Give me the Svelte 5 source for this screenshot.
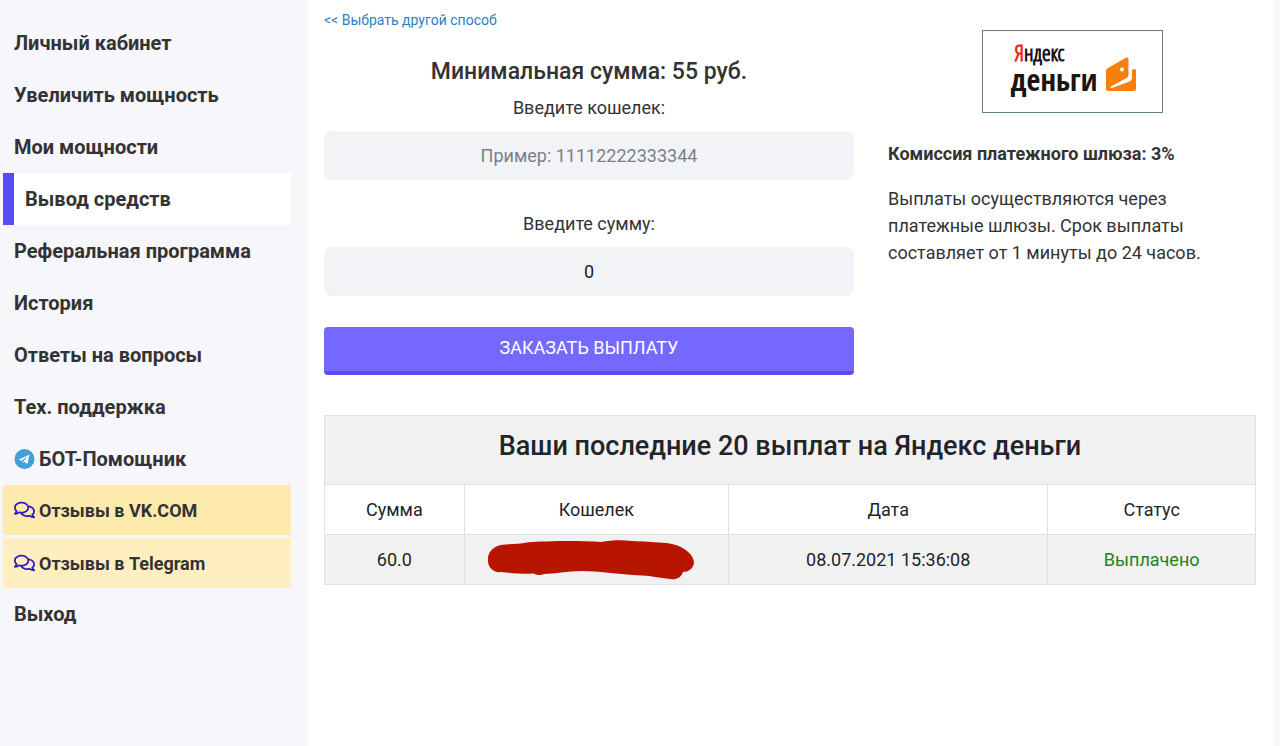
<script>
  const menu = [
    { title: "Личный кабинет" },
    { title: "Увеличить мощность" },
    { title: "Мои мощности" },
    { title: "Вывод средств", active: true },
    { title: "Реферальная программа" },
    { title: "История" },
    { title: "Ответы на вопросы" },
    { title: "Тех. поддержка" },
    { title: "БОТ-Помощник", icon: "telegram" },
    { title: "Отзывы в VK.COM", icon: "comments", mark: "strong" },
    { title: "Отзывы в Telegram", icon: "comments", mark: "light" },
    { title: "Выход" },
  ];

  const payouts = [
    { sum: "60.0", date: "08.07.2021 15:36:08", status: "Выплачено" },
  ];

  let wallet = "";
  let amount = "0";
</script>

<div class="page">
  <nav class="sidebar">
    {#each menu as item}
      <a
        href="#menu"
        class="item"
        class:active={item.active}
        class:strong={item.mark === "strong"}
        class:light={item.mark === "light"}
      >
        {#if item.icon === "telegram"}
          <svg class="icon" viewBox="0 0 20 20" aria-hidden="true">
            <circle cx="10" cy="10" r="10" fill="#419fd9" />
            <path fill="#f7f6fb" d="M15 5.500L4.200 10.600L7.200 11.800L13 7.600L9 12.200L13 15Z" />
            <path fill="#c5dff1" d="M7.200 11.800L9 12.200L8.600 14.500Z" />
          </svg>
        {:else if item.icon === "comments"}
          <svg class="icon" viewBox="0 0 576 512" aria-hidden="true">
            <path
              fill="#2a17c8"
              d="M532 386.200c27.500-27.100 44-61.100 44-98.200 0-80-76.500-146.100-176.200-157.900C368.300 72.500 294.300 32 208 32 93.100 32 0 103.600 0 192c0 37 16.500 71 44 98.200-15.300 30.700-37.300 54.500-37.700 54.900-6.300 6.700-8.100 16.500-4.400 25 3.600 8.500 12 14 21.200 14 53.500 0 96.700-20.200 125.200-38.800 9.200 2.100 18.700 3.700 28.400 4.900C208.100 407.600 281.800 448 368 448c20.800 0 40.800-2.400 59.800-6.800C456.300 459.700 499.400 480 553 480c9.200 0 17.500-5.500 21.200-14 3.600-8.500 1.900-18.300-4.400-25-.4-.3-22.500-24.100-37.800-54.800zm-392.800-92.300L122.100 305c-14.100 9.100-28.500 16.300-43.100 21.400 2.700-4.700 5.400-9.700 8-14.800l15.500-31.100L77.700 256C64.200 242.600 48 220.700 48 192c0-60.700 73.300-112 160-112s160 51.300 160 112-73.300 112-160 112c-16.500 0-33-1.900-49-5.600l-19.800-4.500zM498.300 352l-24.700 24.400 15.500 31.100c2.600 5.100 5.300 10.100 8 14.800-14.600-5.100-29-12.300-43.100-21.400l-17.100-11.100-19.900 4.600c-16 3.700-32.500 5.600-49 5.600-54 0-102.200-20.100-131.300-49.700C338 339.500 416 272.900 416 192c0-3.400-.4-6.700-.7-10C479.700 196.500 528 238.800 528 288c0 28.700-16.200 50.600-29.700 64z"
            />
          </svg>
        {/if}
        <span>{item.title}</span>
      </a>
    {/each}
  </nav>

  <main class="content">
    <a class="back" href="#methods">&lt;&lt; Выбрать другой способ</a>

    <div class="columns">
      <form class="order" on:submit|preventDefault>
        <h2>Минимальная сумма: 55 руб.</h2>
        <label for="wallet">Введите кошелек:</label>
        <input
          id="wallet"
          type="text"
          placeholder="Пример: 11112222333344"
          bind:value={wallet}
        />
        <label for="amount">Введите сумму:</label>
        <input id="amount" type="text" bind:value={amount} />
        <button type="submit">ЗАКАЗАТЬ ВЫПЛАТУ</button>
      </form>

      <aside class="info">
        <div class="logo">
          <div class="name">
            <span class="yandex"><span class="red">Я</span>ндекс</span>
            <span class="money">деньги</span>
          </div>
          <svg class="purse" viewBox="0 0 30 34" aria-hidden="true">
            <path
              fill="#f77f0b"
              d="M2 11L19.500 1Q22.500-.5 22.500 2V12H28.500Q30 12 30 13.500V31.500Q30 34 27.500 34H2.500Q0 34 0 31.500V14Q0 12 2 11Z"
            />
            <path
              fill="#fff"
              d="M22.500 11V17.500Q22.500 20 20.500 21L5 29.500Q3.500 31 6 31L23.500 24.500Q26 23.500 26 21V13.500L28 11.500Z"
            />
            <circle cx="16" cy="12.500" r="2" fill="#fff" />
          </svg>
        </div>
        <strong>Комиссия платежного шлюза: 3%</strong>
        <p>
          Выплаты осуществляются через платежные шлюзы. Срок выплаты составляет
          от 1 минуты до 24 часов.
        </p>
      </aside>
    </div>

    <table>
      <colgroup>
        <col class="col-sum" />
        <col class="col-wallet" />
        <col class="col-date" />
        <col />
      </colgroup>
      <thead>
        <tr class="caption">
          <th colspan="4">Ваши последние 20 выплат на Яндекс деньги</th>
        </tr>
        <tr>
          <th>Сумма</th>
          <th>Кошелек</th>
          <th>Дата</th>
          <th>Статус</th>
        </tr>
      </thead>
      <tbody>
        {#each payouts as payout}
          <tr>
            <td>{payout.sum}</td>
            <td class="hidden">
              <svg viewBox="0 0 208 40" role="img" aria-label="Кошелек скрыт">
                <path
                  fill="#b81500"
                  d="M14 5C22 4 32 4 40 2.500C60 1 90 .5 114 2C125 0 135 0 145 1C160 2 175 2 185 4C198 7 207 15 207 23C206 29 201 32 196 32C194 38 189 40 183 39C172 38 165 36 155 35.500C130 34 110 31 95 31C80 31 68 34 57 34C54 36 50 35 47 33.500C38 34 24 33 14 32C8 33 2 29 1 22C0 13 5 7 14 5Z"
                />
              </svg>
            </td>
            <td>{payout.date}</td>
            <td class="paid">{payout.status}</td>
          </tr>
        {/each}
      </tbody>
    </table>
  </main>
</div>

<style>
  :global(body) {
    margin: 0;
    background: #f7f6fb;
  }
  .page {
    display: flex;
    min-height: 100vh;
    padding-right: 7px;
    box-sizing: border-box;
    font-family: Roboto, "Liberation Sans", sans-serif;
    font-size: 18px;
    color: #333;
  }

  .sidebar {
    flex: 0 0 288px;
    padding: 17px 17px 17px 3px;
  }
  .item {
    display: flex;
    align-items: center;
    gap: 4px;
    height: 52px;
    padding-left: 11px;
    font-size: 20px;
    font-weight: 700;
    color: #333;
    text-decoration: none;
  }
  .item.active {
    background: #fff;
    border-left: 11px solid #5a4bf9;
  }
  .item.strong,
  .item.light {
    height: 50px;
    background: #ffeaad;
    font-size: 18px;
  }
  .item.light {
    margin-top: 3px;
    background: #ffefc0;
  }
  .icon {
    width: 21px;
    height: 20px;
  }

  .content {
    flex: 1;
    min-width: 0;
    padding: 10px 17px 24px 16px;
    background: #fff;
  }
  .back {
    display: block;
    font-size: 14px;
    line-height: 20px;
    color: #2a7fc4;
    text-decoration: none;
  }
  .columns {
    display: grid;
    grid-template-columns: 530fr 368fr;
    gap: 34px;
    margin-bottom: 40px;
  }

  .order {
    display: flex;
    flex-direction: column;
    padding-top: 27px;
    text-align: center;
  }
  h2 {
    margin: 0 0 8px;
    font-size: 23px;
    line-height: 30px;
    font-weight: 500;
  }
  label {
    margin-bottom: 10px;
    line-height: 26px;
  }
  input {
    height: 49px;
    margin-bottom: 31px;
    padding: 0 12px;
    box-sizing: border-box;
    border: none;
    border-radius: 8px;
    background: #f2f3f7;
    font: inherit;
    color: #222;
    text-align: center;
  }
  input::placeholder {
    color: #7b8086;
    opacity: 1;
  }
  button {
    height: 48px;
    padding: 0 0 3px;
    border: none;
    border-bottom: 4px solid #5a4bf9;
    border-radius: 4px;
    background: #7568ff;
    font: inherit;
    color: #fff;
  }

  .info {
    line-height: 27px;
  }
  .logo {
    display: flex;
    align-items: center;
    justify-content: center;
    gap: 9px;
    width: 181px;
    height: 83px;
    margin: 0 auto 27px;
    padding-top: 4px;
    box-sizing: border-box;
    border: 1px solid #5f8087;
    background: #fff;
  }
  .name {
    display: flex;
    flex-direction: column;
    padding: 0 0 14px 3px;
    font-family: "Open Sans Condensed", "Liberation Sans Narrow", "Noto Sans",
      sans-serif;
    color: #1c1412;
  }
  .yandex {
    padding-left: 4px;
    font-family: "Open Sans Condensed Light", "Liberation Sans Narrow",
      "Open Sans Condensed", sans-serif;
    font-size: 22px;
    line-height: 26px;
    -webkit-text-stroke: 1px currentColor;
  }
  .red {
    color: #e8262b;
  }
  .money {
    font-size: 30px;
    line-height: 30px;
    font-weight: 700;
  }
  .purse {
    width: 30px;
    height: 34px;
  }
  strong {
    display: block;
    font-weight: 700;
  }
  p {
    max-width: 320px;
    margin: 18px 0 0;
  }

  table {
    width: 100%;
    border-collapse: collapse;
    table-layout: fixed;
    color: #212529;
  }
  th,
  td {
    height: 49px;
    padding: 0;
    border: 1px solid #dfe1e4;
    font-weight: 400;
    text-align: center;
  }
  .caption th {
    height: 60px;
    padding-bottom: 8px;
    font-size: 27px;
    font-weight: 500;
  }
  .caption,
  tbody tr {
    background: #f1f1f1;
  }
  .col-sum {
    width: 15%;
  }
  .col-wallet {
    width: 28.4%;
  }
  .col-date {
    width: 34.3%;
  }
  .hidden svg {
    display: block;
    width: 208px;
    height: 40px;
    margin-left: 22px;
  }
  .paid {
    color: #1b861b;
  }
</style>
